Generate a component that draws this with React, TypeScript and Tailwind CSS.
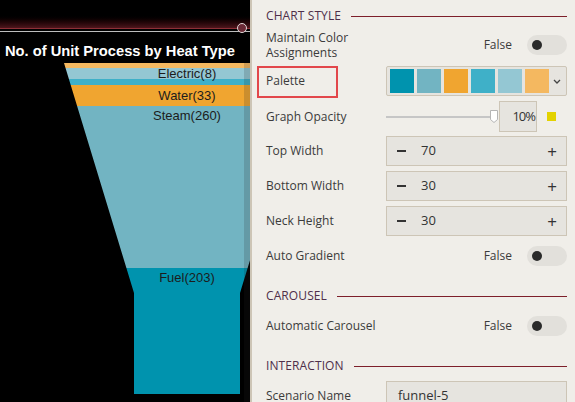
import React from 'react';

const PALETTE = ['#0093ae', '#72b4c2', '#f0a530', '#3fb0c8', '#94c7d3', '#f4b860'];

function Heading({ title, className = '' }: { title: string; className?: string }) {
  return (
    <div className={`flex items-center gap-[10px] h-[20px] ${className}`}>
      <span className="text-[12px] text-[#4f2e4a] tracking-[0.1px]">{title}</span>
      <div className="flex-1 h-px bg-[#7d1f2a]" />
    </div>
  );
}

function Toggle() {
  return (
    <div className="flex items-center gap-[15px]">
      <span className="text-[12px] text-[#3b3b3b]">False</span>
      <div className="w-[40px] h-[20px] rounded-full bg-[#e2e0db] flex items-center pl-[5px]">
        <div className="w-[10px] h-[10px] rounded-full bg-[#2a2a2a]" />
      </div>
    </div>
  );
}

function Spinner({ value }: { value: number }) {
  return (
    <div className="h-[30px] border border-[#cdc5b6] bg-[#e6e4df] flex items-center pl-[9px] pr-[9px] text-[13px] text-[#333]">
      <span className="w-[10px] flex justify-center">
        <span className="block w-[9px] h-[1.5px] bg-[#333]" />
      </span>
      <span className="ml-[15px] flex-1">{value}</span>
      <span className="text-[17px] leading-none text-[#333]">+</span>
    </div>
  );
}

function Row({ label, children, className = '' }: { label: React.ReactNode; children: React.ReactNode; className?: string }) {
  return (
    <div className={`flex items-center h-[30px] ${className}`}>
      <div className="w-[120px] shrink-0 text-[12px] text-[#3b3b3b]">{label}</div>
      <div className="flex-1">{children}</div>
    </div>
  );
}

function Funnel() {
  // svg y=0 is the top of the funnel (page y 63)
  const clip = '64,0 310,0 240,230 240,331 134,331 134,230';
  const bands = [
    { y: 0, h: 5, c: '#f4b860' },
    { y: 5, h: 11, c: '#94c7d3' },
    { y: 16, h: 6, c: '#3fb0c8' },
    { y: 22, h: 21, c: '#f0a530' },
    { y: 43, h: 162, c: '#72b4c2' },
    { y: 205, h: 126, c: '#0093ae' },
  ];
  const labels = [
    { t: 'Electric(8)', y: 10 },
    { t: 'Water(33)', y: 32 },
    { t: 'Steam(260)', y: 52 },
    { t: 'Fuel(203)', y: 214 },
  ];
  return (
    <svg width="250" height="339" className="block">
      <defs>
        <clipPath id="funnel">
          <polygon points={clip} />
        </clipPath>
      </defs>
      <g clipPath="url(#funnel)">
        {bands.map(b => (
          <rect key={b.y} x={0} y={b.y} width={320} height={b.h} fill={b.c} />
        ))}
      </g>
      {labels.map(l => (
        <text
          key={l.t}
          x={187}
          y={l.y}
          textAnchor="middle"
          dominantBaseline="central"
          fontFamily="'Liberation Sans', Arial, sans-serif"
          fontSize={13}
          fill="#1c1c1c"
        >
          {l.t}
        </text>
      ))}
      <rect x={244} y={0} width={6} height={339} fill="rgba(40,40,40,0.18)" />
    </svg>
  );
}

export default function App() {
  return (
    <div className="w-[575px] h-[402px] overflow-hidden flex" style={{ fontFamily: "'Open Sans', sans-serif" }}>
      {/* chart */}
      <div className="w-[250px] shrink-0 bg-black relative overflow-hidden">
        <div className="h-[28px] bg-gradient-to-b from-black from-50% to-[#4d161c]" />
        <div className="h-px bg-[#8e2f37]" />
        <div className="h-[2px] bg-black" />
        <div className="h-px bg-[#bdbdbd]" />
        <div
          className="pl-[5px] pt-[10px] pb-[3px] h-[31px] text-white font-bold text-[14.7px] leading-[18px] whitespace-nowrap"
          style={{ fontFamily: "'Liberation Sans', Arial, sans-serif" }}
        >
          No. of Unit Process by Heat Type
        </div>
        <Funnel />
        <div className="absolute left-[237px] top-[23px] w-[10px] h-[10px] rounded-full border-[1.5px] border-[#e2dada] bg-[#6b2a36]" />
      </div>

      {/* settings panel */}
      <div className="flex-1 min-w-0 bg-[#f0eee9] border-l-2 border-[#cdc5b6] pl-[14px] pr-[8px] pt-[6px] overflow-hidden">
        <Heading title="CHART STYLE" />

        <div className="flex items-center h-[38px]">
          <div className="flex-1 text-[12px] leading-[15px] text-[#3b3b3b]">
            Maintain Color
            <br />
            Assignments
          </div>
          <Toggle />
        </div>

        <Row
          className="mt-[2px] relative"
          label={
            <>
              <div className="absolute left-[-9px] top-0 w-[81px] h-[32px] border-2 border-[#e2474b]" />
              Palette
            </>
          }
        >
          <div className="h-[30px] border border-[#cdc5b6] bg-[#e6e4df] rounded-[2px] flex items-center pl-[3px] gap-[3px]">
            {PALETTE.map(c => (
              <div key={c} className="w-[24px] h-[24px]" style={{ backgroundColor: c }} />
            ))}
            <svg width="8" height="5" viewBox="0 0 8 5" className="ml-[1px]">
              <path d="M1 1l3 3 3-3" fill="none" stroke="#444" strokeWidth="1.3" />
            </svg>
          </div>
        </Row>

        <Row className="mt-[5px] h-[31px]" label="Graph Opacity">
          <div className="flex items-center">
            <div className="w-[107px] h-[2px] bg-[#c6c6c6] relative">
              <svg width="8" height="13" viewBox="0 0 8 13" className="absolute left-[104px] top-[-6px]">
                <path d="M0.5 0.5h7v9l-3.5 3-3.5-3z" fill="#fff" stroke="#b5b5b5" />
              </svg>
            </div>
            <div className="ml-[6px] w-[38px] h-[31px] border border-[#cdc5b6] bg-[#e6e4df] flex items-center justify-end pr-[1px] text-[13px] text-[#333] tracking-[-1px]">
              10%
            </div>
            <div className="ml-[10px] w-[9px] h-[9px] bg-[#e3d200]" />
          </div>
        </Row>

        <Row className="mt-[4px]" label="Top Width">
          <Spinner value={70} />
        </Row>
        <Row className="mt-[5px]" label="Bottom Width">
          <Spinner value={30} />
        </Row>
        <Row className="mt-[5px]" label="Neck Height">
          <Spinner value={30} />
        </Row>

        <div className="flex items-center h-[30px] mt-[5px]">
          <div className="flex-1 text-[12px] text-[#3b3b3b]">Auto Gradient</div>
          <Toggle />
        </div>

        <Heading title="CAROUSEL" className="mt-[15px]" />
        <div className="flex items-center h-[30px] mt-[5px]">
          <div className="flex-1 text-[12px] text-[#3b3b3b]">Automatic Carousel</div>
          <Toggle />
        </div>

        <Heading title="INTERACTION" className="mt-[15px]" />
        <Row className="mt-[5px]" label="Scenario Name">
          <div className="h-[30px] border border-[#cdc5b6] bg-[#e6e4df] flex items-center pl-[11px] text-[13px] text-[#333]">
            funnel-5
          </div>
        </Row>
      </div>
    </div>
  );
}
